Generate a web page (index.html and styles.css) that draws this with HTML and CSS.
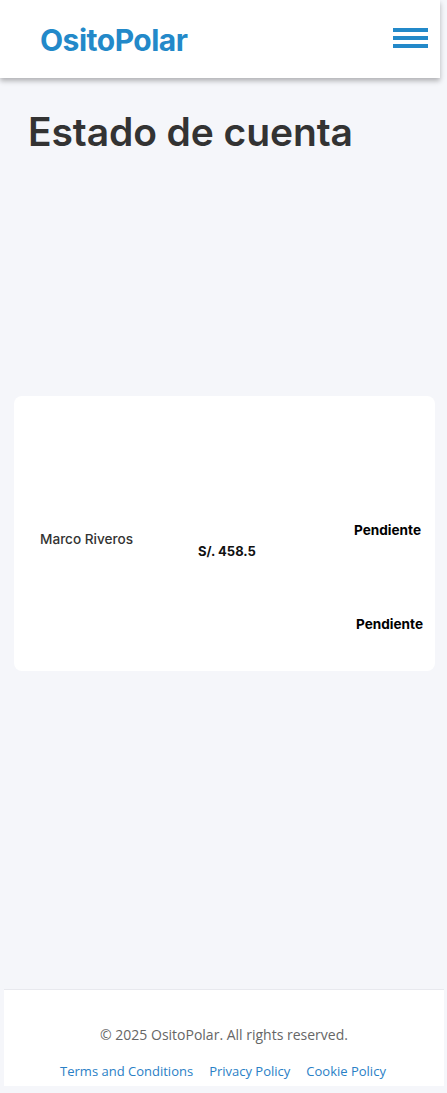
FILE: index.html
```html
<!DOCTYPE html>
<html lang="es">
<head>
<meta charset="utf-8">
<title>Estado de cuenta</title>
<link rel="stylesheet" href="styles.css">
</head>
<body>
<header class="topbar">
  <a class="logo" href="#">OsitoPolar</a>
  <button class="menu" aria-label="Menu">
    <span></span><span></span><span></span>
  </button>
</header>
<main class="content">
  <h1 class="title">Estado de cuenta</h1>
  <section class="card">
    <div class="row row-main">
      <div class="cell name">Marco Riveros</div>
      <div class="cell amount">S/. 458.5</div>
      <div class="cell status">Pendiente</div>
    </div>
    <div class="row row-second">
      <div class="cell status status-2">Pendiente</div>
    </div>
  </section>
</main>
<footer class="footer">
  <p class="copy">© 2025 OsitoPolar. All rights reserved.</p>
  <nav class="links">
    <a href="#">Terms and Conditions</a>
    <a href="#">Privacy Policy</a>
    <a href="#">Cookie Policy</a>
  </nav>
</footer>
</body>
</html>
```
FILE: styles.css
```css
* { box-sizing: border-box; }
html, body { margin: 0; padding: 0; }
body {
  background: #f5f6fa;
  font-family: Inter, "Liberation Sans", sans-serif;
  width: 447px;
  min-height: 1093px;
  display: flex;
  flex-direction: column;
}
.topbar {
  width: 440px;
  height: 78px;
  background: #fff;
  box-shadow: 0 3px 5px rgba(0,0,0,0.28);
  display: flex;
  align-items: center;
  justify-content: space-between;
  padding: 0 12px 0 40px;
}
.logo {
  color: #2389c9;
  font-weight: 700;
  font-size: 30px;
  text-decoration: none;
  letter-spacing: -0.5px;
  margin-top: 2px;
}
.menu {
  background: none;
  border: 0;
  padding: 0;
  width: 35px;
  display: flex;
  flex-direction: column;
  gap: 4px;
  margin-top: -2px;
}
.menu span {
  display: block;
  height: 4px;
  background: #2389c9;
}
.content {
  flex: 1;
  padding: 0 12px 0 14px;
}
.title {
  margin: 30px 0 0 14px;
  font-size: 39px;
  font-weight: 600;
  color: #333;
  line-height: 48px;
  letter-spacing: -0.1px;
}
.card {
  margin-top: 240px;
  width: 421px;
  height: 275px;
  background: #fff;
  border-radius: 8px;
  padding-top: 126px;
  font-size: 13.6px;
  line-height: 16px;
}
.row { display: flex; }
.name {
  margin: 9px 0 0 26px;
  width: 158px;
  font-weight: 500;
  color: #333;
}
.amount {
  margin-top: 21px;
  width: 156px;
  font-size: 13px;
  font-weight: 700;
  color: #111;
}
.status {
  font-weight: 700;
  color: #000;
}
.row-second {
  margin-top: 57px;
  padding-left: 342px;
}
.footer {
  margin: 0 3px 7px 4px;
  width: 440px;
  height: 97px;
  background: #fff;
  border-top: 1px solid #e8e9ee;
  font-family: "Open Sans", sans-serif;
  font-size: 14px;
  text-align: center;
  padding-top: 35px;
}
.copy {
  margin: 0;
  color: #666;
  line-height: 20px;
}
.links {
  margin-top: 16px;
  display: flex;
  justify-content: center;
  gap: 16px;
  line-height: 20px;
  font-size: 13px;
  padding-right: 2px;
}
.links a {
  color: #2a80c6;
  text-decoration: none;
}
```
